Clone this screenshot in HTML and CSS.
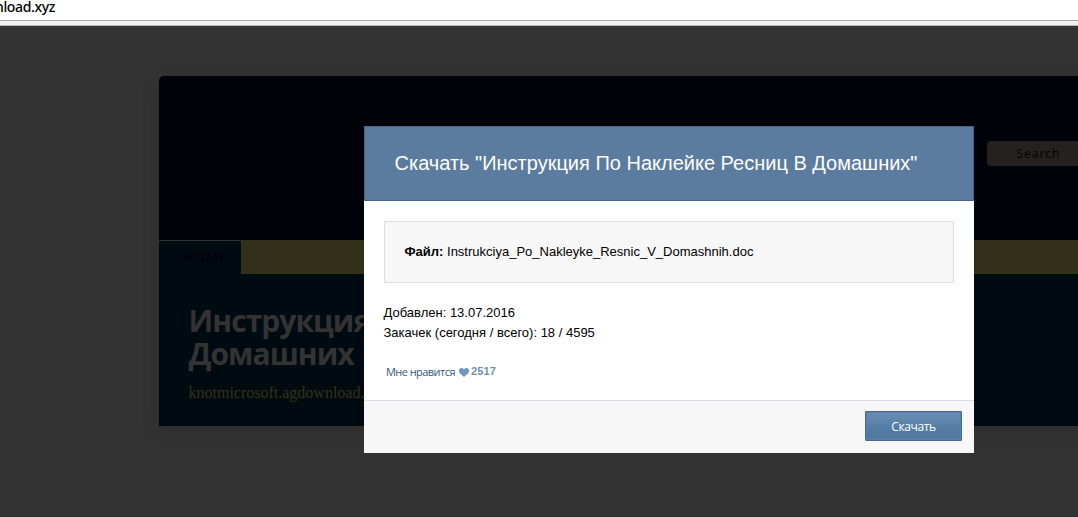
FILE: index.html
```html
<!DOCTYPE html>
<html lang="ru">
<head>
<meta charset="utf-8">
<title>Скачать</title>
<link rel="stylesheet" href="styles.css">
</head>
<body>
<div class="address-bar"><span class="address">nload.xyz</span></div>
<div class="toolbar-edge"></div>
<main class="page">
  <div class="site">
    <header class="site-header"><div class="search">Search</div></header>
    <nav class="nav"><span class="nav-item">HOME</span></nav>
    <section class="intro">
      <h1 class="title">Инструкция<br>Домашних</h1>
      <div class="domain">knotmicrosoft.agdownload.</div>
    </section>
  </div>
</main>
<div class="modal">
  <header class="modal-header"><span class="modal-title">Скачать "Инструкция По Наклейке Ресниц В Домашних"</span></header>
  <div class="modal-body">
    <div class="file"><span><b>Файл:</b> Instrukciya_Po_Nakleyke_Resnic_V_Domashnih.doc</span></div>
    <div class="stats">Добавлен: 13.07.2016<br>Закачек (сегодня / всего): 18 / 4595</div>
    <div class="like">
      <span class="like-label">Мне нравится</span>
      <svg class="heart" width="10" height="9" viewBox="0 0 10 9"><path d="M5 9L1 5.4C0 4.4 0 3 0 2.5C0 1 1 0 2.5 0C3.700 0 4.600.6 5 1.500C5.400.6 6.300 0 7.500 0C9 0 10 1 10 2.500C10 3 10 4.400 9 5.400Z" fill="#7197c0"/></svg>
      <b class="like-count">2517</b>
    </div>
  </div>
  <footer class="modal-footer"><div class="button"><span class="button-label">Скачать</span></div></footer>
</div>
</body>
</html>
```
FILE: styles.css
```css
* { box-sizing: border-box; }
body {
  margin: 0;
  width: 1078px;
  height: 517px;
  overflow: hidden;
  background: #333;
  font-family: "Liberation Sans", Arial, sans-serif;
}
.address-bar {
  height: 21px;
  background: #fff;
  border-bottom: 1px solid #a5a7a3;
}
.address {
  display: block;
  margin-left: -5px;
  font: 500 14px/14px "Noto Sans", sans-serif;
  letter-spacing: -0.35px;
  color: #000;
}
.toolbar-edge {
  height: 5px;
  background: #f2f1f0;
  border-bottom: 1px solid #b8b6b4;
}
.page {
  height: 491px;
  padding: 50px 0 0 159px;
  border-bottom: 1px solid #2e2b2a;
}
.site {
  width: 960px;
  height: 350px;
  border-radius: 5px 5px 0 0;
  background: #000b11;
  box-shadow: 0 5px 20px rgba(0, 0, 0, .14);
}
.site-header {
  height: 164px;
  padding: 65px 0 0 828px;
  border-radius: 5px 5px 0 0;
  background: #00020a;
}
.search {
  width: 130px;
  height: 25px;
  padding-left: 29.500px;
  border-radius: 4px;
  background: #24211f;
  color: #050505;
  font: 12px/25px "Noto Sans", sans-serif;
  letter-spacing: 1px;
}
.nav {
  display: flex;
  height: 34px;
  background: #333019;
}
.nav-item {
  width: 82px;
  padding-left: 24.500px;
  border-top: 1px solid #333;
  background: #000b11;
  color: #00020a;
  font: bold 14px/32px "Open Sans", sans-serif;
  letter-spacing: 0;
}
.intro { padding: 30px 0 0 29.500px; }
.title {
  margin: 0;
  color: #333;
  font: bold 30px/33px "Open Sans", sans-serif;
  letter-spacing: -0.95px;
}
.domain {
  margin-top: 13px;
  color: #333314;
  font: 16px/20px "Liberation Serif", serif;
}
.modal {
  position: absolute;
  left: 364px;
  top: 126px;
  width: 610px;
  height: 327px;
  background: #fff;
}
.modal-header {
  height: 75px;
  padding-left: 29.500px;
  border: 1px solid #43658a;
  background: #5b7b9f;
  color: #fff;
  font-size: 20px;
  line-height: 73px;
  white-space: nowrap;
}
.modal-body {
  height: 199px;
  padding: 20px 20px 0;
}
.file {
  height: 62px;
  padding-left: 19.500px;
  border: 1px solid #dadde8;
  background: #f7f7f7;
  color: #000;
  font-size: 13px;
  line-height: 60px;
}
.stats {
  margin: 20px 0 0 -0.5px;
  color: #000;
  font-size: 13px;
  line-height: 20px;
}
.like {
  display: flex;
  align-items: center;
  height: 18px;
  margin: 20px 0 0 2px;
}
.like-label {
  width: 73px;
  color: #36587c;
  font: 11px/18px "Open Sans", sans-serif;
  letter-spacing: -0.55px;
  white-space: nowrap;
}
.heart { margin-top: 1px; }
.like-count {
  margin: -2px 0 0 2px;
  color: #6f8fb1;
  font-size: 11px;
  line-height: 18px;
  letter-spacing: 0.1px;
}
.modal-footer {
  display: flex;
  justify-content: flex-end;
  height: 53px;
  padding: 10px 12px 0 0;
  border-top: 1px solid #dadde8;
  background: #f7f7f7;
}
.button {
  width: 97px;
  height: 30px;
  border: 1px solid #45688e;
  border-radius: 1px;
  background: linear-gradient(#6a8fb6, #527aa3 65%, #5078a1);
  box-shadow: inset 0 0 0 1px #5c82ab;
  color: #fff;
  font: 500 12px/29px "Open Sans", sans-serif;
  letter-spacing: -0.4px;
  text-align: center;
}
```
